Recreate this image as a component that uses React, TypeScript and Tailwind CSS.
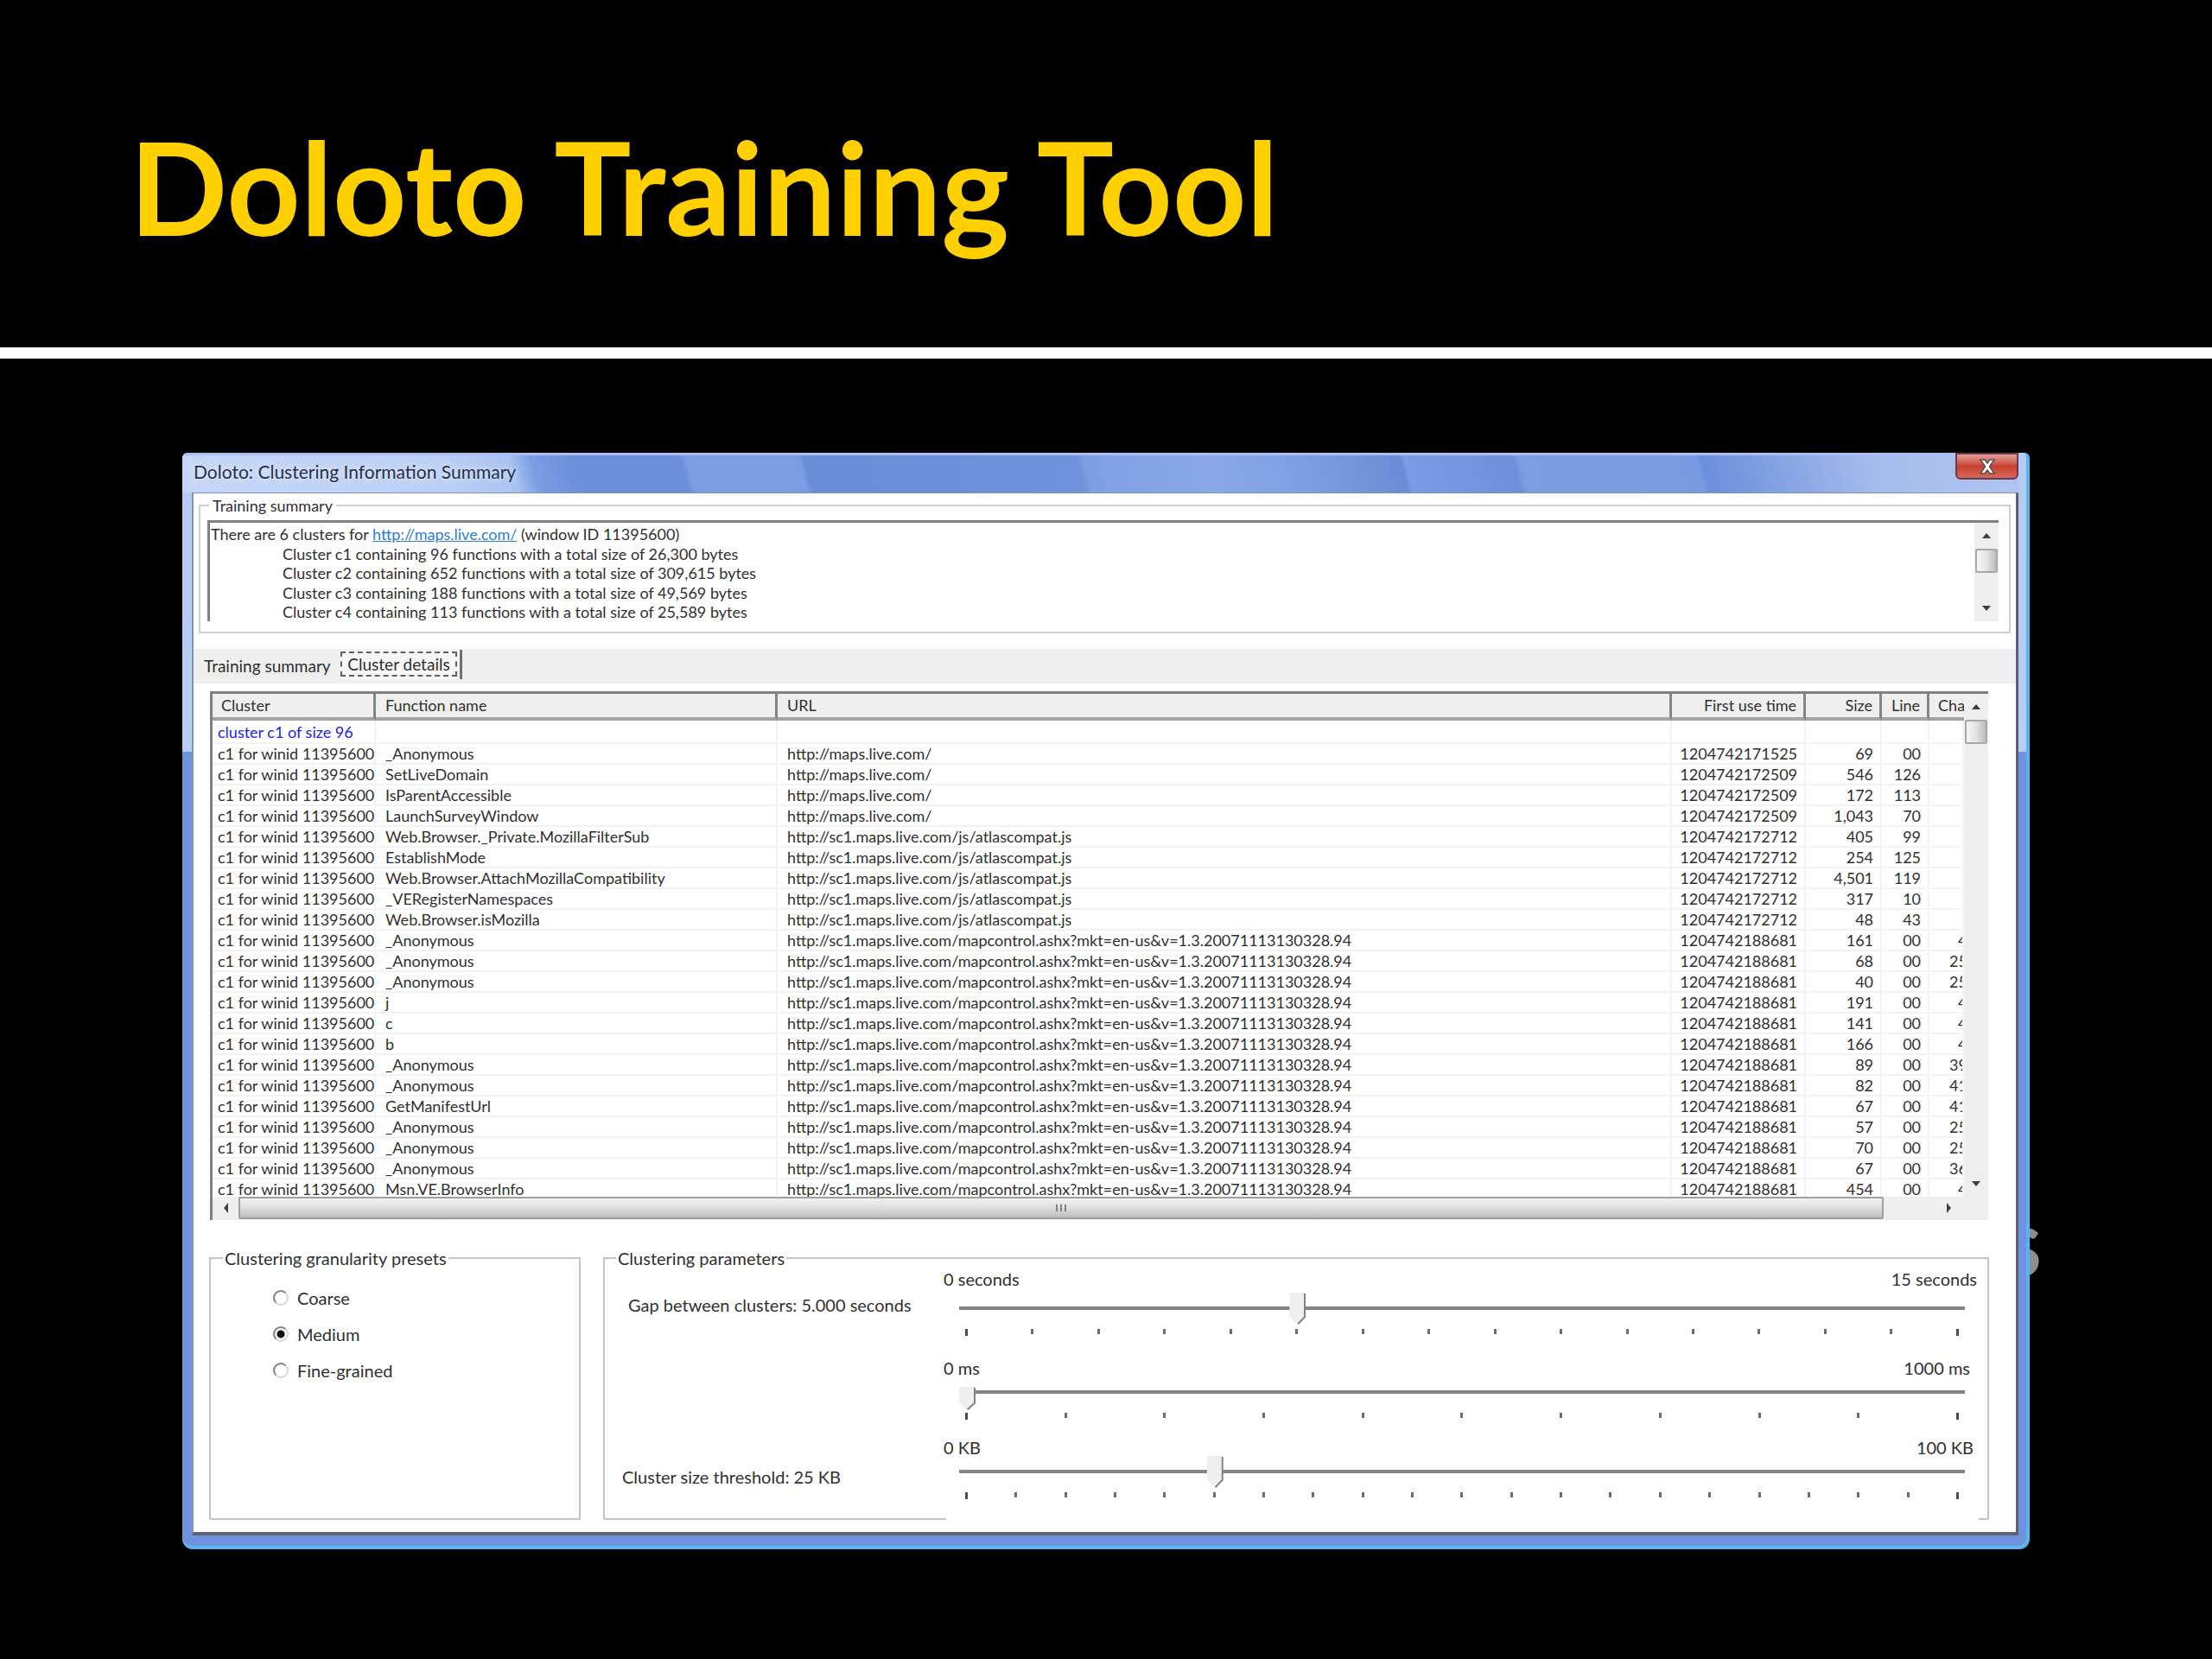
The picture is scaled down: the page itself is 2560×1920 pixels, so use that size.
import React, { useState } from "react";

type Row = [name: string, url: string, time: string, size: string, line: string, char: string];

const MAPS = "http://maps.live.com/";
const ATLAS = "http://sc1.maps.live.com/js/atlascompat.js";
const CONTROL = "http://sc1.maps.live.com/mapcontrol.ashx?mkt=en-us&v=1.3.20071113130328.94";

const rows: Row[] = [
  ["_Anonymous", MAPS, "1204742171525", "69", "00", ""],
  ["SetLiveDomain", MAPS, "1204742172509", "546", "126", ""],
  ["IsParentAccessible", MAPS, "1204742172509", "172", "113", ""],
  ["LaunchSurveyWindow", MAPS, "1204742172509", "1,043", "70", ""],
  ["Web.Browser._Private.MozillaFilterSub", ATLAS, "1204742172712", "405", "99", ""],
  ["EstablishMode", ATLAS, "1204742172712", "254", "125", ""],
  ["Web.Browser.AttachMozillaCompatibility", ATLAS, "1204742172712", "4,501", "119", ""],
  ["_VERegisterNamespaces", ATLAS, "1204742172712", "317", "10", ""],
  ["Web.Browser.isMozilla", ATLAS, "1204742172712", "48", "43", ""],
  ["_Anonymous", CONTROL, "1204742188681", "161", "00", "4"],
  ["_Anonymous", CONTROL, "1204742188681", "68", "00", "25"],
  ["_Anonymous", CONTROL, "1204742188681", "40", "00", "25"],
  ["j", CONTROL, "1204742188681", "191", "00", "4"],
  ["c", CONTROL, "1204742188681", "141", "00", "4"],
  ["b", CONTROL, "1204742188681", "166", "00", "4"],
  ["_Anonymous", CONTROL, "1204742188681", "89", "00", "39"],
  ["_Anonymous", CONTROL, "1204742188681", "82", "00", "41"],
  ["GetManifestUrl", CONTROL, "1204742188681", "67", "00", "41"],
  ["_Anonymous", CONTROL, "1204742188681", "57", "00", "25"],
  ["_Anonymous", CONTROL, "1204742188681", "70", "00", "25"],
  ["_Anonymous", CONTROL, "1204742188681", "67", "00", "36"],
  ["Msn.VE.BrowserInfo", CONTROL, "1204742188681", "454", "00", "4"],
];

const summary = [
  "Cluster c1 containing 96 functions with a total size of 26,300 bytes",
  "Cluster c2 containing 652 functions with a total size of 309,615 bytes",
  "Cluster c3 containing 188 functions with a total size of 49,569 bytes",
  "Cluster c4 containing 113 functions with a total size of 25,589 bytes",
];

function Arrow({ dir }: { dir: "up" | "down" | "left" | "right" }) {
  const d = {
    up: "M1 9 L6 3 L11 9 Z",
    down: "M1 3 L6 9 L11 3 Z",
    left: "M9 0 L4 6 L9 12 Z",
    right: "M3 0 L8 6 L3 12 Z",
  }[dir];
  return (
    <svg viewBox="0 0 12 12" className="size-3" aria-hidden="true">
      <path d={d} fill="#404040" />
    </svg>
  );
}

function VerticalBar({ label }: { label: string }) {
  return (
    <div className="flex w-7 shrink-0 flex-col items-center bg-[#efefef]">
      <button aria-label={label + " up"} className="flex h-[30px] w-full items-center justify-center">
        <Arrow dir="up" />
      </button>
      <div className="h-7 w-[26px] rounded-xs border-2 border-[#a8a8a8] bg-linear-to-r from-[#f6f6f6] via-[#e4e4e4] to-[#bcbcbc]" />
      <div className="grow" />
      <button aria-label={label + " down"} className="flex h-[30px] w-full items-center justify-center">
        <Arrow dir="down" />
      </button>
    </div>
  );
}

function Slider({ label, low, high, pad, steps, start, thumb, gap }: {
  label: string; low: string; high: string; pad: string; steps: number; start: number; thumb: "tall" | "short"; gap: string;
}) {
  const [value, setValue] = useState(start);
  return (
    <div className="flex flex-col">
      <div className={"flex h-6 items-center justify-between leading-6 " + pad}>
        <span>{low}</span>
        <span>{high}</span>
      </div>
      <div className="mr-[26px] ml-[18px]">
        <div className={"relative h-1 bg-[#848484] " + gap}>
          <input
            type="range"
            aria-label={label}
            min={0}
            max={steps}
            value={value}
            onChange={(e) => setValue(Number(e.target.value))}
            className={
              thumb === "tall"
                ? "absolute -top-4 left-0 h-9 w-full appearance-none bg-transparent drop-shadow-[2px_1px_0_#848484] [&::-webkit-slider-thumb]:h-9 [&::-webkit-slider-thumb]:w-[17px] [&::-webkit-slider-thumb]:appearance-none [&::-webkit-slider-thumb]:bg-[#efefef] [&::-webkit-slider-thumb]:[clip-path:polygon(0_0,100%_0,100%_76%,50%_100%,0_76%)]"
                : "absolute -top-1 left-0 h-[26px] w-full appearance-none bg-transparent drop-shadow-[2px_1px_0_#848484] [&::-webkit-slider-thumb]:h-[26px] [&::-webkit-slider-thumb]:w-[17px] [&::-webkit-slider-thumb]:appearance-none [&::-webkit-slider-thumb]:bg-[#efefef] [&::-webkit-slider-thumb]:[clip-path:polygon(0_0,100%_0,100%_70%,50%_100%,0_70%)]"
            }
          />
        </div>
        <div className="mt-[22px] flex h-2 justify-between px-[7px]">
          {Array.from({ length: steps + 1 }, (_, i) => (
            <span key={i} className={i === 0 || i === steps ? "h-2 w-[3px] bg-[#4c4c4c]" : "h-[6px] w-[3px] bg-[#6c6c6c]"} />
          ))}
        </div>
      </div>
    </div>
  );
}

export default function App() {
  const [preset, setPreset] = useState("Medium");
  const th = "border-r-3 border-[#858585] p-0 font-normal";
  return (
    <div className="flex min-h-screen flex-col bg-black font-['Lato','Open_Sans',sans-serif] text-[18px] text-[#303030]">
      <header className="border-b-[13px] border-white pl-[150px]">
        <h1 className="pt-[136px] pb-[106px] text-[149px] leading-[160px] font-bold text-[#ffd000]">Doloto Training Tool</h1>
      </header>

      <main className="relative px-[211px] pt-[109px]">
        <span aria-hidden="true" className="absolute right-[197px] bottom-[304px] text-[110px] leading-[110px] font-bold text-[#8c8c8c]">s</span>

        <section className="relative overflow-hidden rounded-t-md rounded-b-xl border-r-4 border-b-4 border-[#55b4f2] bg-linear-to-b from-[#b4cbf4] via-[#bfd0f5] to-[#cbd8f8]">
          <div className="bg-[linear-gradient(to_bottom,transparent_346px,#6f93dc_346px)] pr-[9px] pb-3">
            <div className="flex h-[46px] justify-between border-t-3 border-[#aac0f0] bg-[linear-gradient(75deg,#c5d6f7_0px,#bccff5_300px,#a9c2f0_375px,#7b9de3_400px,#6b8fd8_447px,#6b8fd8_567px,#7b9de3_573px,#7b9de3_699px,#698ed7_705px,#6e93da_1010px,#7e9fe3_1018px,#8aa8e5_1153px,#7d9fe2_1260px,#698cd4_1371px,#7b9ce4_1376px,#6d90d8_1497px,#7d9de3_1504px,#7a9be1_1702px,#6b8fdb_1708px,#a6bcec_1900px,#b0c5f0_2070px)] pl-[13px]">
              <h2 className="pt-1 text-[21px] leading-[30px] text-[#26304a] [text-shadow:0_0_8px_#fff]">Doloto: Clustering Information Summary</h2>
              <button aria-label="Close" className="-mt-[3px] flex h-[31px] w-[73px] items-center justify-center rounded-b-md border-2 border-[#6b3a4a] bg-linear-to-b from-[#e2a09a] via-[#c8402f] to-[#d4675a]">
                <svg viewBox="0 0 20 18" className="h-[18px] w-5" aria-hidden="true">
                  <path d="M2 1h5l3 4 3-4h5l-5.500 8 5.500 8h-5l-3-4-3 4H2l5.500-8Z" fill="#fff" stroke="#5c4a50" strokeWidth="1.500" />
                </svg>
              </button>
            </div>

            <div className="ml-[11px] border-2 border-t border-r-3 border-b-4 border-[#8394b4] border-r-[#5a6272] border-b-[#5f6670] bg-white">
              <fieldset className="mx-[6px] mt-1 border-2 border-[#d0d0d0] pr-3 pb-3 pl-2">
                <legend className="ml-[2px] px-1 leading-5">Training summary</legend>
                <div className="mt-[7px] flex h-[117px] border-t-3 border-l-3 border-[#808080]">
                  <div className="flex grow flex-col justify-between overflow-hidden pt-[2px] pl-px leading-[22px]">
                    <p>There are 6 clusters for <a href="http://maps.live.com/" className="text-[#2a7fd4] underline">http://maps.live.com/</a> (window ID 11395600)</p>
                    {summary.map((line) => <p key={line} className="pl-[83px]">{line}</p>)}
                  </div>
                  <VerticalBar label="Scroll summary" />
                </div>
              </fieldset>

              <div role="tablist" className="mt-[18px] flex h-10 items-start bg-[#efefef] pl-3 text-[19px]">
                <button role="tab" aria-selected="false" className="h-10 w-[158px] text-left leading-10">Training summary</button>
                <div className="mt-px border-r-3 border-[#707070] bg-[#f7f7f7] pt-[2px] pr-[3px] pb-[3px]">
                  <button role="tab" aria-selected="true" className="h-[29px] w-[135px] border-2 border-dashed border-[#606060] leading-6">Cluster details</button>
                </div>
              </div>

              <div className="mt-[9px] mr-[32px] ml-[19px] border-t-3 border-l-3 border-[#808080]">
                <div className="flex h-[582px]">
                  <div className="min-w-0 grow overflow-hidden">
                    <table className="w-full table-fixed border-separate border-spacing-0">
                      <colgroup>
                        <col className="w-[189px]" />
                        <col className="w-[465px]" />
                        <col />
                        <col className="w-[155px]" />
                        <col className="w-[88px]" />
                        <col className="w-[55px]" />
                        <col className="w-[40px]" />
                      </colgroup>
                      <thead>
                        <tr className="h-[31px] bg-[#efefef] text-left [&>th]:border-b-4 [&>th]:border-b-[#a4a4a4]">
                          <th className={th + " pl-[10px]"}>Cluster</th>
                          <th className={th + " pl-[11px]"}>Function name</th>
                          <th className={th + " pl-[11px]"}>URL</th>
                          <th className={th + " pr-2 text-right"}>First use time</th>
                          <th className={th + " pr-2 text-right"}>Size</th>
                          <th className={th + " pr-2 text-right"}>Line</th>
                          <th className="overflow-hidden p-0 pl-[10px] font-normal">Char</th>
                        </tr>
                      </thead>
                      <tbody className="[&_td]:border-r-2 [&_td]:border-b-2 [&_td]:border-[#f3f3f3] [&_td]:whitespace-nowrap">
                        <tr className="h-[27px] leading-6 text-[#2222ee]">
                          <td className="p-0 pl-[6px]">cluster c1 of size 96</td>
                          <td /><td /><td /><td /><td /><td />
                        </tr>
                        {rows.map(([name, url, time, size, line, char], i) => (
                          <tr key={i} className="h-6 leading-[22px]">
                            <td className="p-0 pl-[6px]">c1 for winid 11395600</td>
                            <td className="p-0 pl-[11px]">{name}</td>
                            <td className="p-0 pl-[11px]">{url}</td>
                            <td className="p-0 pr-2 text-right">{time}</td>
                            <td className="p-0 pr-2 text-right">{size}</td>
                            <td className="p-0 pr-2 text-right">{line}</td>
                            <td className={char.length === 1 ? "overflow-hidden p-0 pl-[33px]" : "overflow-hidden p-0 pl-[23px]"}>{char}</td>
                          </tr>
                        ))}
                      </tbody>
                    </table>
                  </div>
                  <VerticalBar label="Scroll list" />
                </div>
                <div className="flex h-[27px] items-start bg-[#efefef]">
                  <button aria-label="Scroll left" className="flex h-[26px] w-[30px] items-center justify-center"><Arrow dir="left" /></button>
                  <div className="flex h-[26px] grow items-center justify-center gap-[3px] rounded-xs border-2 border-[#a0a0a0] bg-linear-to-b from-[#f2f2f2] via-[#dedede] to-[#bdbdbd]">
                    <span className="h-2 w-[2px] bg-[#808080]" />
                    <span className="h-2 w-[2px] bg-[#808080]" />
                    <span className="h-2 w-[2px] bg-[#808080]" />
                  </div>
                  <button aria-label="Scroll right" className="ml-[62px] mr-[31px] flex h-[26px] w-7 items-center justify-center"><Arrow dir="right" /></button>
                </div>
              </div>

              <div className="mt-8 mr-[31px] mb-[14px] ml-[18px] flex gap-[26px] text-[20px]">
                <fieldset className="h-[315px] w-[430px] border-2 border-[#c4c4c4] pl-[72px]">
                  <legend className="-ml-[58px] px-[2px] leading-6">Clustering granularity presets</legend>
                  <div className="mt-[22px] flex flex-col gap-[18px]">
                    {["Coarse", "Medium", "Fine-grained"].map((p) => (
                      <label key={p} className="flex h-6 items-center gap-[10px]">
                        <input
                          type="radio"
                          name="preset"
                          checked={preset === p}
                          onChange={() => setPreset(p)}
                          className="size-[18px] appearance-none rounded-full border-2 border-[#d8d8d8] border-t-[#808080] border-l-[#808080] bg-white bg-[radial-gradient(circle,#111_0_4px,transparent_5px)] bg-no-repeat not-checked:bg-none"
                        />
                        {p}
                      </label>
                    ))}
                  </div>
                </fieldset>

                <div className="relative grow">
                  <fieldset className="flex h-[315px] border-2 border-[#c4c4c4]">
                    <legend className="ml-[13px] px-[2px] leading-6">Clustering parameters</legend>
                    <div className="flex w-[392px] shrink-0 flex-col justify-between pt-[30px] pb-9 pl-5">
                      <span className="pl-[7px] leading-6">Gap between clusters: 5.000 seconds</span>
                      <span className="leading-6">Cluster size threshold: 25 KB</span>
                    </div>
                    <div className="grow">
                      <Slider label="Gap between clusters" low="0 seconds" high="15 seconds" pad="pr-3" steps={15} start={5} thumb="tall" gap="mt-5" />
                      <div className="mt-[25px]">
                        <Slider label="Gap in milliseconds" low="0 ms" high="1000 ms" pad="pr-5" steps={10} start={0} thumb="short" gap="mt-[14px]" />
                      </div>
                      <div className="mt-5">
                        <Slider label="Cluster size threshold" low="0 KB" high="100 KB" pad="pr-4" steps={20} start={5} thumb="tall" gap="mt-[14px]" />
                      </div>
                    </div>
                  </fieldset>
                  <div className="absolute right-3 bottom-0 left-[397px] h-[2px] bg-white" />
                </div>
              </div>
            </div>
          </div>
        </section>
      </main>
    </div>
  );
}
